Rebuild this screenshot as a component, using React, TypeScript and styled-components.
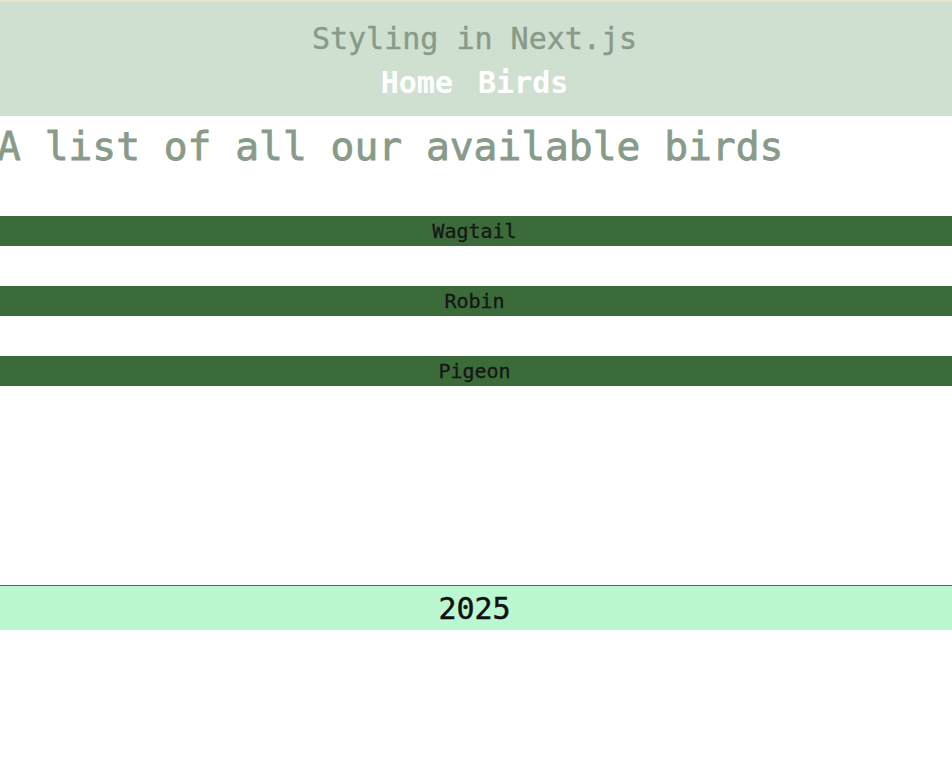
import React from 'react';
import styled, { createGlobalStyle } from 'styled-components';

const GlobalStyle = createGlobalStyle`
  html, body {
    margin: 0;
    padding: 0;
    background: #fff;
    overflow-x: hidden;
  }
  body {
    font-family: "DejaVu Sans Mono", "Liberation Mono", monospace;
  }
`;

const Page = styled.div`
  margin-left: -3px;
  width: calc(100% + 3px);
  display: flex;
  flex-direction: column;
`;

const Header = styled.header`
  border-top: 2px solid #e8e3c9;
  background: #d0e0d0;
  padding: 19px 0 15px;
  display: flex;
  flex-direction: column;
  align-items: center;
`;

const SiteTitle = styled.div`
  font-size: 30px;
  line-height: 36px;
  color: #889b89;
  -webkit-text-stroke: 0.4px #889b89;
`;

const Nav = styled.nav`
  display: flex;
  gap: 25px;
  margin-top: 8px;
`;

const NavLink = styled.a`
  font-size: 30px;
  line-height: 36px;
  font-weight: bold;
  color: #ffffff;
  text-decoration: none;
`;

const Heading = styled.h1`
  margin: 6px 0 0;
  font-size: 39.6px;
  line-height: 48px;
  font-weight: normal;
  color: #889b89;
  -webkit-text-stroke: 0.8px #889b89;
  white-space: nowrap;
`;

const BirdList = styled.ul`
  list-style: none;
  margin: 46px 0 0;
  padding: 0;
  display: flex;
  flex-direction: column;
  gap: 40px;
`;

const BirdItem = styled.li`
  height: 30px;
  background: #3b6b39;
  color: #161616;
  font-size: 20px;
  line-height: 30px;
  text-align: center;
  -webkit-text-stroke: 0.3px #161616;
`;

const Footer = styled.footer`
  margin-top: 199px;
  border-top: 1px solid #5c5c7c;
  background: #bbf7d0;
  height: 44px;
  display: flex;
  align-items: center;
  justify-content: center;
  font-size: 30px;
  color: #111;
  -webkit-text-stroke: 0.5px #111;
`;

const birds = ['Wagtail', 'Robin', 'Pigeon'];

const App = (): JSX.Element => {
  return (
    <>
      <GlobalStyle />
      <Page>
        <Header>
          <SiteTitle>Styling in Next.js</SiteTitle>
          <Nav>
            <NavLink href="#">Home</NavLink>
            <NavLink href="#">Birds</NavLink>
          </Nav>
        </Header>
        <Heading>A list of all our available birds</Heading>
        <BirdList>
          {birds.map((bird) => (
            <BirdItem key={bird}>{bird}</BirdItem>
          ))}
        </BirdList>
        <Footer>2025</Footer>
      </Page>
    </>
  );
};

export default App;
